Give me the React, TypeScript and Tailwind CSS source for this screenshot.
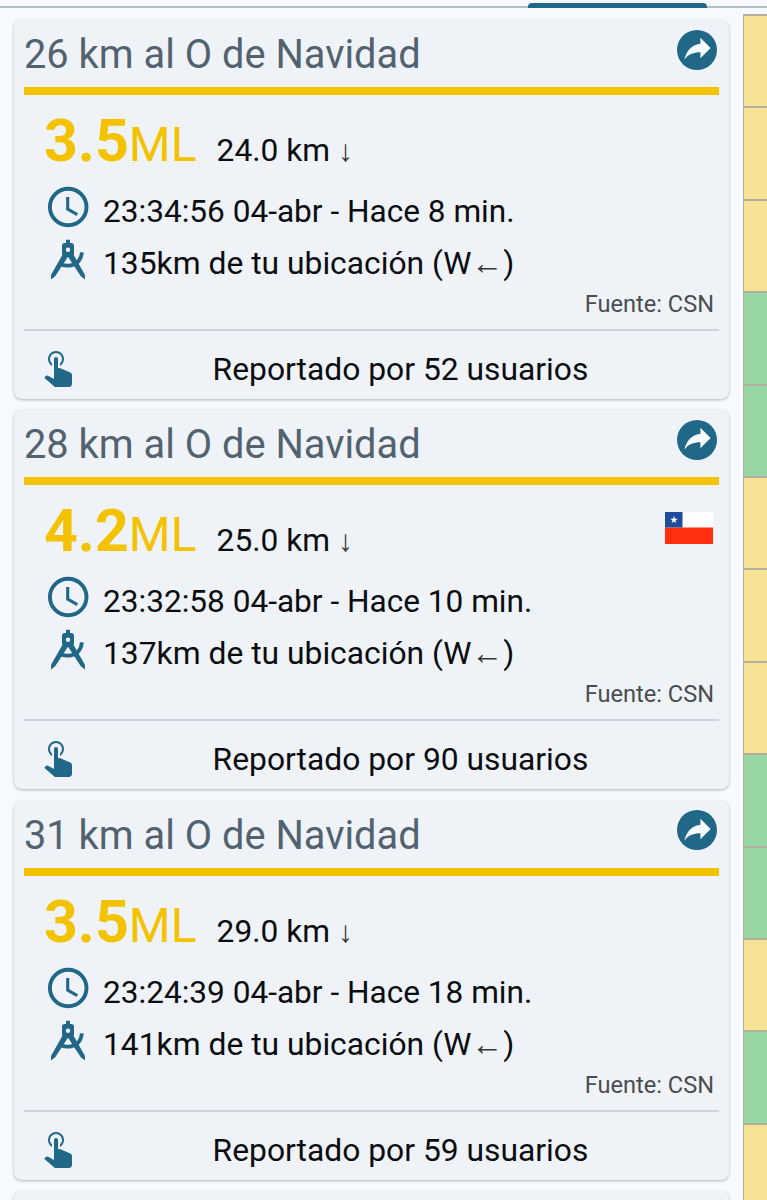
type Quake = {
  id: number;
  place: string;
  magnitude: string;
  depth: string;
  time: string;
  distance: string;
  reports: number;
  showFlag?: boolean;
};

const quakes: Quake[] = [
  {
    id: 1,
    place: "26 km al O de Navidad",
    magnitude: "3.5",
    depth: "24.0 km",
    time: "23:34:56 04-abr - Hace 8 min.",
    distance: "135km de tu ubicación",
    reports: 52,
  },
  {
    id: 2,
    place: "28 km al O de Navidad",
    magnitude: "4.2",
    depth: "25.0 km",
    time: "23:32:58 04-abr - Hace 10 min.",
    distance: "137km de tu ubicación",
    reports: 90,
    showFlag: true,
  },
  {
    id: 3,
    place: "31 km al O de Navidad",
    magnitude: "3.5",
    depth: "29.0 km",
    time: "23:24:39 04-abr - Hace 18 min.",
    distance: "141km de tu ubicación",
    reports: 59,
  },
];

// y = yellow, g = green
const sideCells = ["y", "y", "y", "g", "g", "y", "y", "y", "g", "g", "y", "g", "y"];

function ShareIcon() {
  return (
    <div className="flex h-10 w-10 items-center justify-center rounded-full bg-[#206788]">
      <svg viewBox="0 0 24 24" className="ml-0.5 h-[35px] w-[35px] shrink-0 fill-[#f8fbfe]">
        <path d="M21 11 14 4v4C7 9 4 14 3 19c2.500-3.500 6-5.100 11-5.100V18z" />
      </svg>
    </div>
  );
}

function ClockIcon() {
  return (
    <svg viewBox="0 0 42 42" className="h-[42px] w-[42px] fill-none stroke-[#206788]">
      <circle cx="21.200" cy="21" r="18.300" strokeWidth="3.900" />
      <path d="M20.700 11v12.200l9.600 5.400" strokeWidth="3.100" />
    </svg>
  );
}

function CompassIcon() {
  return (
    <svg viewBox="0 0 36 42" className="h-[42px] w-9 fill-[#206788]">
      <path
        fillRule="evenodd"
        d="M16 .7h4v3.400h1.400c1.500 0 2.600 1.100 2.600 2.600v7.500c0 2-2 4.300-6 4.300s-6-2.300-6-4.300V6.700c0-1.500 1.100-2.600 2.600-2.600H16zM18 8.600a2.200 2.200 0 1 0 0 4.400 2.200 2.200 0 0 0 0-4.400z"
      />
      <path d="M12.600 15.500 17.300 18.800 5.200 37.200.9 40.400 1.100 35.800zM23.400 15.500 18.700 18.800 30.800 37.200l4.300 3.200-.2-4.600z" />
      <path d="M10.500 25.200c7.500 3 14.300 1.200 17.800-2.800 2.200-2.500 3.300-5.500 3.600-9" className="fill-none stroke-[#206788]" strokeWidth="3.800" />
    </svg>
  );
}

function TapIcon() {
  return (
    <svg viewBox="0 0 24 24" className="h-12 w-12 shrink-0 fill-[#206788]">
      <path d="M10 9a1 1 0 0 1 2 0v4.470l1.210.130 4.940 2.190c.530.240.850.770.850 1.350v4.360c-.030.820-.680 1.470-1.500 1.500H11c-.380 0-.740-.150-1-.430l-4.900-4.200.740-.770c.190-.210.460-.320.740-.320h.220L10 19V9m1-4a4 4 0 0 1 4 4c0 1.500-.800 2.770-2 3.460v-1.220c.610-.550 1-1.350 1-2.240a3 3 0 0 0-6 0c0 .890.390 1.690 1 2.240v1.220C7.800 11.770 7 10.500 7 9a4 4 0 0 1 4-4z" />
    </svg>
  );
}

function ChileFlag() {
  return (
    <svg viewBox="0 0 48 32" className="h-8 w-12">
      <rect width="48" height="16" fill="#fff" />
      <rect y="15.500" width="48" height="16.500" fill="#ff2f10" />
      <rect width="17.500" height="15.500" fill="#204c9c" />
      <path d="M9 4l1 2.700h2.800L10.500 8.400l.9 2.700L9 9.400l-2.400 1.700.9-2.700-2.300-1.700H8z" fill="#fff" />
    </svg>
  );
}

function QuakeCard({ item }: { item: Quake }) {
  return (
    <article className="h-[379px] shrink-0 rounded-lg bg-[#eff3f8] px-2.5 shadow-[0_1px_3px_rgba(0,0,0,0.28)]">
      <div className="flex h-[67px] justify-between pr-[2.500px]">
        <h2 className="text-[39.800px] leading-[70px] text-[#52626e]">{item.place}</h2>
        <div className="pt-[9.500px]">
          <ShareIcon />
        </div>
      </div>
      <div className="h-2 bg-[#f3c200]" />

      <div className="flex h-[92px] justify-between pl-5 pr-1.5">
        <div className="flex items-baseline text-[#f3c200]">
          <span className="text-[59px] font-bold leading-[92px]">{item.magnitude}</span>
          <span className="text-[48px] leading-[60px]">ML</span>
          <span className="ml-5 text-[31.700px] leading-[40px] text-[#0b0d10]">
            {item.depth} <span className="font-['Liberation_Sans',sans-serif] text-[30px] text-[#33363a]">↓</span>
          </span>
        </div>
        {item.showFlag && (
          <div className="pt-[27px]">
            <ChileFlag />
          </div>
        )}
      </div>

      <div className="flex h-12 pl-[23px] text-[31.600px] leading-[49px] text-[#0b0d10]">
        <div className="w-14 shrink-0 -mt-px">
          <ClockIcon />
        </div>
        <p className="whitespace-nowrap">{item.time}</p>
      </div>
      <div className="flex h-14 pl-[26px] text-[31.800px] leading-[56px] text-[#0b0d10]">
        <div className="w-[53px] shrink-0 pt-1">
          <CompassIcon />
        </div>
        <p className="whitespace-nowrap">
          {item.distance} (W<span className="font-['Liberation_Sans',sans-serif] text-[#33363a]">←</span>)
        </p>
      </div>
      <p className="h-[38px] pr-[5px] text-right text-[23.600px] leading-[26px] text-[#4a4c50]">Fuente: CSN</p>

      <div className="flex border-t-2 border-[#cfd4da] pl-2.5 pt-2.5">
        <TapIcon />
        <p className="flex-1 text-center text-[31.800px] leading-[56px] text-[#0b0d10]">
          Reportado por {item.reports} usuarios
        </p>
      </div>
    </article>
  );
}

export default function App() {
  return (
    <div className="h-[1200px] w-[767px] overflow-hidden bg-[#f6f9fe] font-[Roboto,sans-serif]">
      <div className="flex h-2 items-end border-b-2 border-[#b7bfc5] pl-[528px]">
        <div className="-mb-0.5 h-[5px] w-[179px] shrink-0 rounded-t bg-[#206788]" />
      </div>
      <div className="flex justify-between pl-3.5">
        <main className="flex w-[715px] flex-col gap-[11.450px] pt-3">
          {quakes.map((item) => (
            <QuakeCard key={item.id} item={item} />
          ))}
          <div className="h-20 shrink-0 rounded-lg bg-[#eff3f8] shadow-[0_1px_3px_rgba(0,0,0,0.28)]" />
        </main>
        <aside className="w-6 pt-1.5">
          {sideCells.map((cell, i) => (
            <div
              key={i}
              className={`h-[92.400px] border-l border-t-2 border-[#b3af9c] ${cell === "g" ? "bg-[#99d6a6]" : "bg-[#f5e294]"}`}
            />
          ))}
        </aside>
      </div>
    </div>
  );
}
